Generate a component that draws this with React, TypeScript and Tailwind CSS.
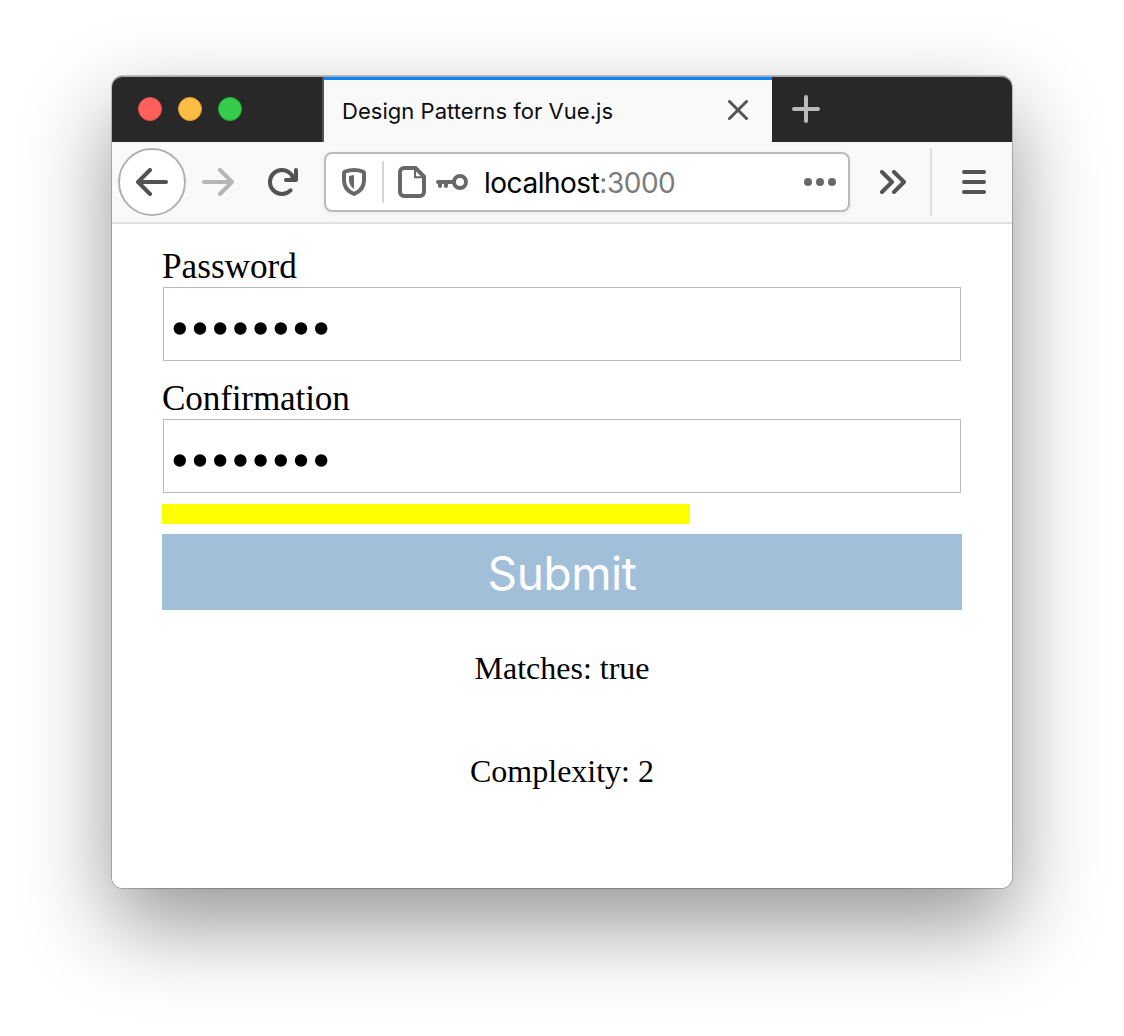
import React from 'react';

function BackIcon() {
  return (
    <svg width="32" height="28" viewBox="0 0 32 28" fill="none" stroke="currentColor" strokeWidth="4" strokeLinecap="round" strokeLinejoin="round">
      <path d="M14 2 2 14l12 12M2.500 14H30" />
    </svg>
  );
}

function ReloadIcon() {
  return (
    <svg width="32" height="28" viewBox="0 0 32 28" fill="none" stroke="currentColor" strokeWidth="4" strokeLinecap="round" strokeLinejoin="round">
      <path d="M22.500 22.400A12 12 0 1 1 22.500 5.600L26 10" />
      <path d="M28 2v10H18" />
      <path d="M28 4v8h-8z" fill="currentColor" stroke="none" />
    </svg>
  );
}

function ShieldIcon() {
  return (
    <svg width="24" height="28" viewBox="0 0 24 28" fill="none">
      <path d="M12 2C8.500 2 5.500 2.700 3 3.600Q2 4 2 5v7.500C2 19 6 23.500 12 26c6-2.500 10-7 10-13.500V5q0-1-1-1.400C18.500 2.700 15.500 2 12 2Z" stroke="#686868" strokeWidth="4" strokeLinejoin="round" />
      <path d="M12 7v14c-3-2-5-5-5-8.500V8Z" fill="#686868" />
    </svg>
  );
}

function PageIcon() {
  return (
    <svg width="28" height="32" viewBox="0 0 28 32" fill="none" stroke="#686868">
      <path d="M6 2h11.500L26 10.500V26a4 4 0 0 1-4 4H6a4 4 0 0 1-4-4V6a4 4 0 0 1 4-4Z" strokeWidth="4" />
      <path d="M17 2v9.200h9" strokeWidth="2" />
    </svg>
  );
}

function KeyIcon() {
  return (
    <svg width="32" height="16" viewBox="0 0 32 16" fill="none" stroke="#686868">
      <circle cx="24" cy="8" r="6" strokeWidth="4" />
      <path d="M2 8h16M4 8v4M10 8v4" strokeWidth="4" strokeLinecap="round" />
    </svg>
  );
}

function TabBar() {
  return (
    <div className="flex h-[66px] bg-[#282828]">
      <div className="flex w-[212px] items-center gap-4 border-r-2 border-[#555352] pl-[26px]">
        <span className="size-6 rounded-full border border-[#e2504d] bg-[#ff605c]" />
        <span className="size-6 rounded-full border border-[#dfa032] bg-[#ffbd44]" />
        <span className="size-6 rounded-full border border-[#25ab35] bg-[#35cb4b]" />
      </div>
      <div className="flex w-[448px] items-center justify-between border-t-4 border-[#0a84ff] bg-[#f9f9fa] pr-6 pl-[18px]">
        <span className="font-['Inter'] text-[22px] tracking-[0.04px] whitespace-nowrap text-[#0c0c0d]">Design Patterns for Vue.js</span>
        <svg className="mb-0.5" width="20" height="20" viewBox="0 0 20 20" stroke="#555556" strokeWidth="3" strokeLinecap="round">
          <path d="m1.500 1.500 17 17m0-17-17 17" />
        </svg>
      </div>
      <div className="flex items-center pl-5">
        <svg width="28" height="28" viewBox="0 0 28 28" stroke="#bbb" strokeWidth="4" strokeLinecap="round">
          <path d="M14 2v24M2 14h24" />
        </svg>
      </div>
    </div>
  );
}

function Toolbar() {
  return (
    <div className="flex h-[82px] items-center border-b-2 border-[#e0e0e1] bg-[#f9f9fa] pl-1.5 text-[#535354]">
      <div className="flex size-[68px] items-center justify-center rounded-full border-2 border-[#b1b1b1] bg-white">
        <BackIcon />
      </div>
      <div className="ml-4 rotate-180 text-[#b5b5b5]">
        <BackIcon />
      </div>
      <div className="ml-[34px]">
        <ReloadIcon />
      </div>
      <div className="ml-6 flex h-[60px] w-[526px] items-center rounded-lg border-2 border-[#bababb] bg-white pl-4 shadow-[0_2px_6px_rgba(0,0,0,0.06)]">
        <ShieldIcon />
        <div className="ml-4 h-[42px] w-0.5 bg-[#d5d5d5]" />
        <div className="ml-3.5"><PageIcon /></div>
        <div className="ml-2.5"><KeyIcon /></div>
        <span className="ml-4 pt-0.5 font-['Inter'] text-[28px] tracking-[-0.48px] text-black">
          localhost<span className="text-[#7c7c7c]">:3000</span>
        </span>
        <div className="mr-3 ml-auto flex gap-1">
          <span className="size-2 rounded-full bg-[#686868]" />
          <span className="size-2 rounded-full bg-[#686868]" />
          <span className="size-2 rounded-full bg-[#686868]" />
        </div>
      </div>
      <svg className="ml-[30px]" width="26" height="24" viewBox="0 0 26 24" fill="none" stroke="currentColor" strokeWidth="4" strokeLinecap="round" strokeLinejoin="round">
        <path d="m2 2 10 10L2 22M14 2l10 10-10 10" />
      </svg>
      <div className="ml-6 h-[68px] w-0.5 bg-[#dedede]" />
      <div className="ml-[30px] flex w-6 flex-col gap-1.5">
        <span className="h-1 rounded-full bg-[#535354]" />
        <span className="h-1 rounded-full bg-[#535354]" />
        <span className="h-1 rounded-full bg-[#535354]" />
      </div>
    </div>
  );
}

function PasswordField({ label, labelClass }: { label: string; labelClass: string }) {
  return (
    <div className="h-[132px]">
      <div className={`h-[41px] text-[35.2px] leading-[45px] ${labelClass}`}>{label}</div>
      <div className="mx-px mt-0.5 border border-[#bababa]">
        <svg className="block" width="796" height="72" viewBox="0 0 796 72">
          {Array.from({ length: 8 }, (_, i) => (
            <circle key={i} cx={15.8 + i * 20.2} cy="40.500" r="6.200" />
          ))}
        </svg>
      </div>
    </div>
  );
}

export default function App() {
  return (
    <div className="h-[1036px] w-[1124px] overflow-hidden bg-white px-28 pt-[76px]">
      <div className="h-[812px] w-[900px] rounded-[11px] shadow-[0_0_0_1px_rgba(0,0,0,0.22),0_36px_88px_rgba(0,0,0,0.42)]">
        <div className="relative h-full overflow-hidden rounded-[11px] bg-white">
          <TabBar />
          <Toolbar />
          <div className="px-[50px] pt-5 font-['Liberation_Serif'] text-black">
            <PasswordField label="Password" labelClass="tracking-normal" />
            <PasswordField label="Confirmation" labelClass="tracking-[-0.16px]" />
            <div className="mt-[-4px] h-5 w-[528px] bg-[#ff0]" />
            <button className="mt-2.5 flex h-[76px] w-full items-center justify-center bg-[#a2bfda] pt-0.5 font-['Inter'] text-[46px] tracking-[-0.4px] text-white">Submit</button>
            <div className="mt-10 text-center text-[32px] leading-[37px]">Matches: true</div>
            <div className="mt-[66px] text-center text-[32px] leading-[37px]">Complexity: 2</div>
          </div>
          <div className="pointer-events-none absolute inset-0 rounded-[11px] border-t border-[#a9a9a9]" />
        </div>
      </div>
    </div>
  );
}
